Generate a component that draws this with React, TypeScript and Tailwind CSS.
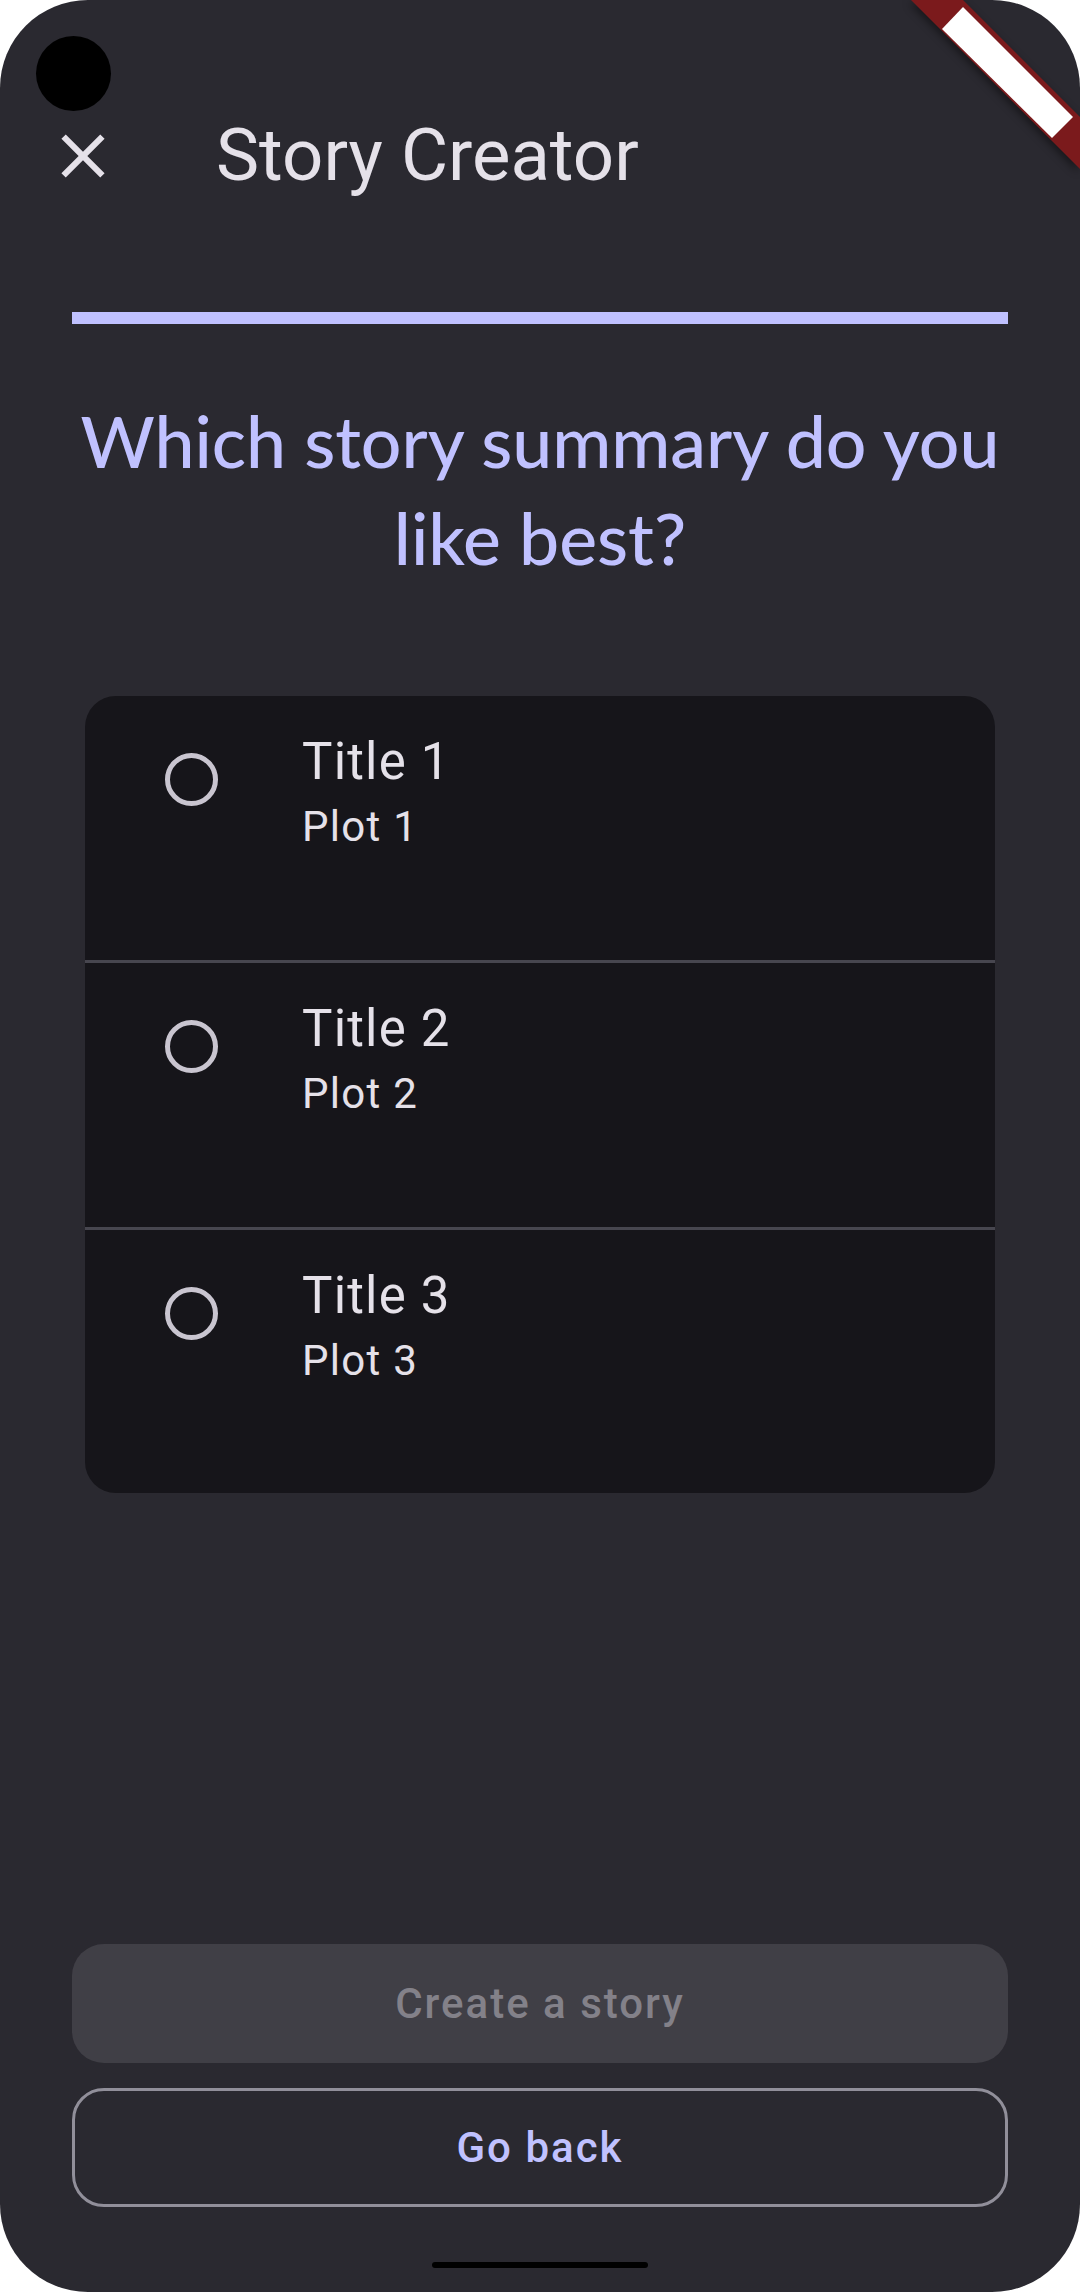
import { useState } from 'react';

const stories = [
  { id: 1, title: 'Title 1', plot: 'Plot 1' },
  { id: 2, title: 'Title 2', plot: 'Plot 2' },
  { id: 3, title: 'Title 3', plot: 'Plot 3' },
];

function CloseIcon() {
  return (
    <svg viewBox="0 0 24 24" className="w-[74px] h-[74px] shrink-0" fill="#e5e1e9">
      <path d="M19 6.41L17.59 5 12 10.59 6.41 5 5 6.41 10.59 12 5 17.59 6.41 19 12 13.41 17.59 19 19 17.59 13.41 12z" />
    </svg>
  );
}

function DebugBanner() {
  return (
    <svg
      className="absolute top-0 right-0 w-[200px] h-[200px] pointer-events-none"
      viewBox="880 0 200 200"
      style={{ filter: 'drop-shadow(-2px 3px 4px rgba(0,0,0,0.45))' }}
    >
      <polygon points="911,0 963,0 1080,117 1080,169" fill="#7b1a1c" />
      <polygon points="963,7 1073,117 1052,138 942,29" fill="#ffffff" />
    </svg>
  );
}

export default function App() {
  const [selected, setSelected] = useState<number | null>(null);

  return (
    <div className="w-[1080px] h-[2292px] bg-white relative overflow-hidden" style={{ fontFamily: 'Roboto, "Noto Sans", sans-serif' }}>
      <div className="h-full rounded-[88px] bg-[#2a2930] flex flex-col relative overflow-hidden">
        {/* camera cutout */}
        <div className="absolute left-[36px] top-[36px] w-[75px] h-[75px] rounded-full bg-black" />

        {/* app bar */}
        <div className="mt-[119px] pl-[46px] flex items-center h-[74px]">
          <CloseIcon />
          <h1 className="ml-[96px] text-[72.5px] leading-none text-[#e5e1e9]">Story Creator</h1>
        </div>

        {/* progress */}
        <div className="mt-[119px] mx-[72px] h-[12px] bg-[#c0c1ff]" />

        <h2
          className="mt-[68px] mx-[60px] text-center text-[71.5px] leading-[97px] font-medium text-[#c0c1ff]"
          style={{ fontFamily: 'Lato, "Noto Sans", sans-serif' }}
        >
          Which story summary do you
          <br />
          like best?
        </h2>

        {/* options */}
        <div className="mt-[110px] mx-[85px] rounded-[31px] bg-[#16151a] overflow-hidden">
          {stories.map((s, i) => (
            <div key={s.id}>
              {i > 0 && <div className="h-[3px] bg-[#47464f]" />}
              <button
                onClick={() => setSelected(s.id)}
                className={`w-full flex items-start pl-[80px] pt-[40px] text-left ${i === 2 ? 'h-[263px]' : 'h-[264px]'}`}
              >
                <div className="mt-[17px] w-[53px] h-[53px] rounded-full border-[5px] border-[#c9c5d0] flex items-center justify-center shrink-0">
                  {selected === s.id && <div className="w-[26px] h-[26px] rounded-full bg-[#c0c1ff]" />}
                </div>
                <div className="ml-[84px] flex flex-col">
                  <span className="text-[51px] leading-none tracking-[1.2px] text-[#e5e1e9]">{s.title}</span>
                  <span className="mt-[19px] text-[42px] leading-none tracking-[1.3px] text-[#e5e1e9]">{s.plot}</span>
                </div>
              </button>
            </div>
          ))}
        </div>

        <div className="flex-1" />

        {/* actions */}
        <div className="mx-[72px] flex flex-col gap-[25px] mb-[85px]">
          <button
            disabled={selected === null}
            className="h-[119px] rounded-[32px] bg-[#403f46] text-[42px] font-medium tracking-[2px] text-[#838189]"
          >
            Create a story
          </button>
          <button className="h-[119px] rounded-[32px] border-[3px] border-[#918f9a] text-[42px] font-medium tracking-[2px] text-[#c0c1ff]">
            Go back
          </button>
        </div>

        {/* home indicator */}
        <div className="absolute bottom-[24px] left-[432px] w-[216px] h-[6px] rounded-full bg-black" />
      </div>
      <DebugBanner />
    </div>
  );
}
